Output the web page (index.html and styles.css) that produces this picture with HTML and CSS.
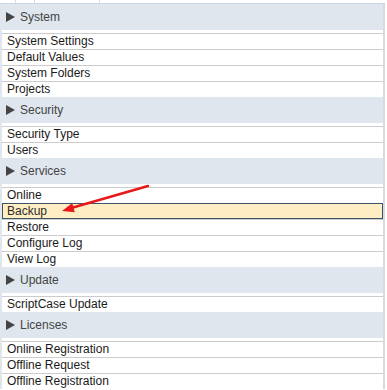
FILE: index.html
```html
<!DOCTYPE html>
<html lang="en">

<head>
    <meta charset="UTF-8">
    <title>Configuration Menu</title>
    <link rel="stylesheet" href="styles.css">
</head>

<body>

    <div class="tabs">
        <div class="tab t1"></div>
        <div class="tab t2"></div>
        <div class="tab t3"></div>
    </div>

    <div class="menu">
        <div class="section">
            <div class="section-title"><span class="caret"></span>System</div>
            <ul class="items">
                <li>System Settings</li>
                <li>Default Values</li>
                <li>System Folders</li>
                <li>Projects</li>
            </ul>
        </div>

        <div class="section">
            <div class="section-title"><span class="caret"></span>Security</div>
            <ul class="items">
                <li>Security Type</li>
                <li>Users</li>
            </ul>
        </div>

        <div class="section">
            <div class="section-title"><span class="caret"></span>Services</div>
            <ul class="items">
                <li>Online</li>
                <li class="active">Backup</li>
                <li>Restore</li>
                <li>Configure Log</li>
                <li>View Log</li>
            </ul>
        </div>

        <div class="section">
            <div class="section-title"><span class="caret"></span>Update</div>
            <ul class="items">
                <li>ScriptCase Update</li>
            </ul>
        </div>

        <div class="section">
            <div class="section-title"><span class="caret"></span>Licenses</div>
            <ul class="items">
                <li>Online Registration</li>
                <li>Offline Request</li>
                <li>Offline Registration</li>
            </ul>
        </div>
    </div>

    <svg class="pointer" width="387" height="390" viewBox="0 0 387 390">
        <line x1="148" y1="186" x2="73" y2="207.5" stroke="#e8191a" stroke-width="2.5" stroke-linecap="round" />
        <polygon points="62,211 74.8,212.3 72.3,203" fill="#e8191a" />
    </svg>

</body>

</html>
```

FILE: styles.css
```css
body {
    margin: 0;
    font-family: 'Liberation Sans', Arial, sans-serif;
    font-size: 12px;
    color: #1a1a1a;
    background-color: #fff;
    position: relative;
    width: 387px;
    height: 390px;
    overflow: hidden;
}

.tabs {
    display: flex;
    height: 3px;
}

.tab {
    border-right: 1px solid #dcdcdc;
}

.t1 {
    width: 15px;
}

.t2 {
    width: 18px;
}

.t3 {
    width: 64px;
}

.menu {
    width: 383px;
    background-color: #dfe6ee;
    border-top: 1px solid #ccd6e0;
    border-right: 2px solid #d3dce5;
}

.section-title {
    display: flex;
    align-items: center;
    height: 26px;
    padding-left: 6px;
    color: #444;
}

.caret {
    width: 0;
    height: 0;
    border-top: 5px solid transparent;
    border-bottom: 5px solid transparent;
    border-left: 9px solid #444;
    margin-right: 5px;
}

.items {
    list-style: none;
    margin: 0 0 0 2px;
    padding: 3px 0 0;
    background-color: #fff;
}

.items li {
    height: 15px;
    line-height: 15px;
    border-top: 1px solid #cccccc;
    padding-left: 5px;
}

.items li.active {
    height: 14px;
    line-height: 14px;
    background-color: #ffeec4;
    border: 1px solid #3d5468;
    box-shadow: 0 1px 0 #b8b8b8;
    padding-left: 4px;
    color: #2b2b2b;
}

.pointer {
    position: absolute;
    left: 0;
    top: 0;
    pointer-events: none;
}
```
